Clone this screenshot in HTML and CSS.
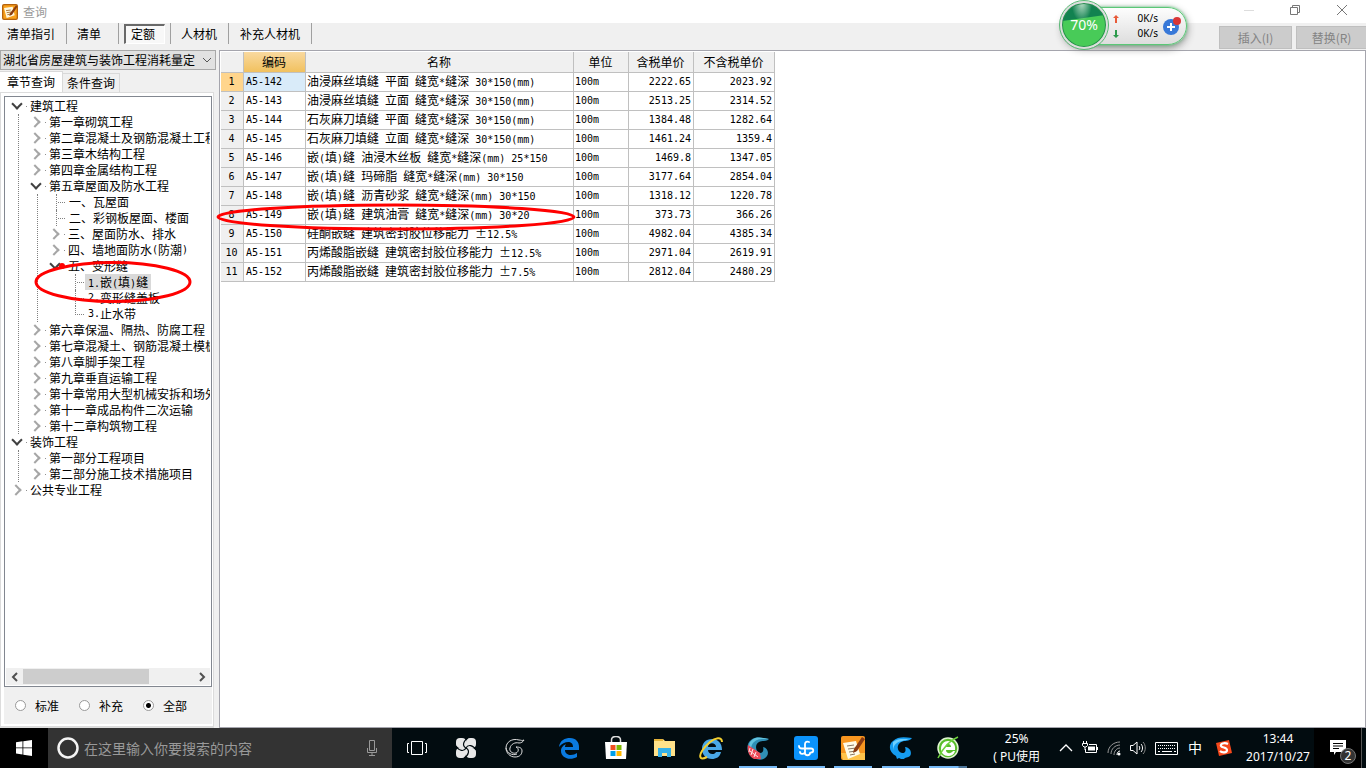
FILE: index.html
```html
<!DOCTYPE html>
<html lang="zh-CN">
<head>
<meta charset="utf-8">
<title>查询</title>
<link rel="stylesheet" href="styles.css">
</head>
<body>
<header class="titlebar">
  <svg class="app-icon" viewBox="0 0 24 24"><rect x="1" y="1" width="22" height="22" rx="2" fill="#f9a11b" stroke="#b5620c" stroke-width="2"/><path d="M3 6l13-2 3 13-12 4z" fill="#fff8e0"/><path d="M6 10l7-1M7 13l7-1M8 16l6-1" stroke="#a06a2a" stroke-width="1.3"/><path d="M21 2l-9 12-1 4 4-2 8-12z" fill="#8a3c10"/></svg>
  <h1 class="title">查询</h1>
  <div class="window-buttons">
    <button aria-label="最小化"><svg viewBox="0 0 12 12"><path d="M1 6.500h10" stroke="#ddd"/></svg></button>
    <button aria-label="还原"><svg viewBox="0 0 12 12"><path d="M1.500 3.500h7v7h-7zM3.500 3.500v-2h7v7h-2" fill="none" stroke="#777"/></svg></button>
    <button aria-label="关闭"><svg viewBox="0 0 12 12"><path d="M1 1l10 10M11 1L1 11" stroke="#777"/></svg></button>
  </div>
</header>
<nav class="toolbar">
  <button class="tool">清单指引</button>
  <button class="tool">清单</button>
  <button class="tool pressed"><span>定额</span></button>
  <button class="tool">人材机</button>
  <button class="tool">补充人材机</button>
  <div class="actions">
    <button disabled>插入(I)</button>
    <button disabled>替换(R)</button>
  </div>
</nav>
<main class="workspace">
  <aside class="sidebar">
    <div class="library">
      <select aria-label="定额库"><option>湖北省房屋建筑与装饰工程消耗量定</option></select>
      <svg viewBox="0 0 10 6"><path d="M1 1l4 4 4-4" fill="none" stroke="#555"/></svg>
    </div>
    <div class="tabs" role="tablist">
      <button class="tab active" role="tab" aria-selected="true">章节查询</button>
      <button class="tab" role="tab">条件查询</button>
    </div>
    <div class="tab-page">
      <div class="tree-box">
        <ul class="tree">
          <li><div class="node"><button class="open" aria-label="折叠"></button>建筑工程</div>
            <ul>
              <li><div class="node"><button aria-label="展开"></button>第一章砌筑工程</div></li>
              <li><div class="node"><button aria-label="展开"></button>第二章混凝土及钢筋混凝土工程</div></li>
              <li><div class="node"><button aria-label="展开"></button>第三章木结构工程</div></li>
              <li><div class="node"><button aria-label="展开"></button>第四章金属结构工程</div></li>
              <li><div class="node"><button class="open" aria-label="折叠"></button>第五章屋面及防水工程</div>
                <ul>
                  <li><div class="node leaf">一、瓦屋面</div></li>
                  <li><div class="node leaf">二、彩钢板屋面、楼面</div></li>
                  <li><div class="node"><button aria-label="展开"></button>三、屋面防水、排水</div></li>
                  <li><div class="node"><button aria-label="展开"></button>四、墙地面防水<span class="m">(</span>防潮<span class="m">)</span></div></li>
                  <li><div class="node"><button class="open" aria-label="折叠"></button>五、变形缝</div>
                    <ul class="last">
                      <li><div class="node leaf"><span class="selected"><span class="m">1.</span>嵌<span class="m">(</span>填<span class="m">)</span>缝</span></div></li>
                      <li><div class="node leaf"><span class="m">2.</span>变形缝盖板</div></li>
                      <li><div class="node leaf"><span class="m">3.</span>止水带</div></li>
                    </ul>
                  </li>
                </ul>
              </li>
              <li><div class="node"><button aria-label="展开"></button>第六章保温、隔热、防腐工程</div></li>
              <li><div class="node"><button aria-label="展开"></button>第七章混凝土、钢筋混凝土模板</div></li>
              <li><div class="node"><button aria-label="展开"></button>第八章脚手架工程</div></li>
              <li><div class="node"><button aria-label="展开"></button>第九章垂直运输工程</div></li>
              <li><div class="node"><button aria-label="展开"></button>第十章常用大型机械安拆和场外</div></li>
              <li><div class="node"><button aria-label="展开"></button>第十一章成品构件二次运输</div></li>
              <li><div class="node"><button aria-label="展开"></button>第十二章构筑物工程</div></li>
            </ul>
          </li>
          <li><div class="node"><button class="open" aria-label="折叠"></button>装饰工程</div>
            <ul>
              <li><div class="node"><button aria-label="展开"></button>第一部分工程项目</div></li>
              <li><div class="node"><button aria-label="展开"></button>第二部分施工技术措施项目</div></li>
            </ul>
          </li>
          <li><div class="node"><button aria-label="展开"></button>公共专业工程</div></li>
        </ul>
        <div class="hscroll">
          <button aria-label="向左"><svg viewBox="0 0 8 10"><path d="M6 1L2 5l4 4" fill="none" stroke="#505050" stroke-width="2"/></svg></button>
          <div class="track"><div class="thumb"></div></div>
          <button aria-label="向右"><svg viewBox="0 0 8 10"><path d="M2 1l4 4-4 4" fill="none" stroke="#505050" stroke-width="2"/></svg></button>
        </div>
      </div>
      <div class="filters">
        <label><input type="radio" name="scope">标准</label>
        <label><input type="radio" name="scope">补充</label>
        <label><input type="radio" name="scope" checked>全部</label>
      </div>
    </div>
  </aside>
  <section class="content">
    <table class="quota">
      <colgroup><col class="c-no"><col class="c-code"><col class="c-name"><col class="c-unit"><col class="c-price"><col class="c-net"></colgroup>
      <thead><tr><th></th><th class="sorted">编码</th><th>名称</th><th>单位</th><th>含税单价</th><th>不含税单价</th></tr></thead>
      <tbody>
        <tr class="current"><th>1</th><td>A5-142</td><td>油浸麻丝填缝<span class="m"> </span>平面<span class="m"> </span>缝宽<span class="m">*</span>缝深<span class="m"> 30*150(mm)</span></td><td>100m</td><td>2222.65</td><td>2023.92</td></tr>
        <tr><th>2</th><td>A5-143</td><td>油浸麻丝填缝<span class="m"> </span>立面<span class="m"> </span>缝宽<span class="m">*</span>缝深<span class="m"> 30*150(mm)</span></td><td>100m</td><td>2513.25</td><td>2314.52</td></tr>
        <tr><th>3</th><td>A5-144</td><td>石灰麻刀填缝<span class="m"> </span>平面<span class="m"> </span>缝宽<span class="m">*</span>缝深<span class="m"> 30*150(mm)</span></td><td>100m</td><td>1384.48</td><td>1282.64</td></tr>
        <tr><th>4</th><td>A5-145</td><td>石灰麻刀填缝<span class="m"> </span>立面<span class="m"> </span>缝宽<span class="m">*</span>缝深<span class="m"> 30*150(mm)</span></td><td>100m</td><td>1461.24</td><td>1359.4</td></tr>
        <tr><th>5</th><td>A5-146</td><td>嵌<span class="m">(</span>填<span class="m">)</span>缝<span class="m"> </span>油浸木丝板<span class="m"> </span>缝宽<span class="m">*</span>缝深<span class="m">(mm) 25*150</span></td><td>100m</td><td>1469.8</td><td>1347.05</td></tr>
        <tr><th>6</th><td>A5-147</td><td>嵌<span class="m">(</span>填<span class="m">)</span>缝<span class="m"> </span>玛碲脂<span class="m"> </span>缝宽<span class="m">*</span>缝深<span class="m">(mm) 30*150</span></td><td>100m</td><td>3177.64</td><td>2854.04</td></tr>
        <tr><th>7</th><td>A5-148</td><td>嵌<span class="m">(</span>填<span class="m">)</span>缝<span class="m"> </span>沥青砂浆<span class="m"> </span>缝宽<span class="m">*</span>缝深<span class="m">(mm) 30*150</span></td><td>100m</td><td>1318.12</td><td>1220.78</td></tr>
        <tr><th>8</th><td>A5-149</td><td>嵌<span class="m">(</span>填<span class="m">)</span>缝<span class="m"> </span>建筑油膏<span class="m"> </span>缝宽<span class="m">*</span>缝深<span class="m">(mm) 30*20</span></td><td>100m</td><td>373.73</td><td>366.26</td></tr>
        <tr><th>9</th><td>A5-150</td><td>硅酮嵌缝<span class="m"> </span>建筑密封胶位移能力<span class="m"> </span>±<span class="m">12.5%</span></td><td>100m</td><td>4982.04</td><td>4385.34</td></tr>
        <tr><th>10</th><td>A5-151</td><td>丙烯酸脂嵌缝<span class="m"> </span>建筑密封胶位移能力<span class="m"> </span>±<span class="m">12.5%</span></td><td>100m</td><td>2971.04</td><td>2619.91</td></tr>
        <tr><th>11</th><td>A5-152</td><td>丙烯酸脂嵌缝<span class="m"> </span>建筑密封胶位移能力<span class="m"> </span>±<span class="m">7.5%</span></td><td>100m</td><td>2812.04</td><td>2480.29</td></tr>
      </tbody>
    </table>
  </section>
</main>

<footer class="taskbar">
  <button class="start" aria-label="开始"><svg viewBox="0 0 16 16"><path d="M0 2.200l6.500-.9v6.200H0zM7.300 1.200L16 0v7.500H7.300zM0 8.300h6.500v6.200L0 13.600zM7.300 8.300H16V16l-8.700-1.200z" fill="#fff"/></svg></button>
  <div class="search">
    <svg class="ring" viewBox="0 0 22 22"><circle cx="11" cy="11" r="9.500" fill="none" stroke="#f4f4f4" stroke-width="2.500"/></svg>
    <input type="text" aria-label="搜索" placeholder="在这里输入你要搜索的内容">
    <svg class="mic" viewBox="0 0 12 18"><path d="M3.500 1.500h5v10h-5zM1.500 9v4.500h9V9M6 13.500v3M3 16.500h6" fill="none" stroke="#999"/></svg>
  </div>
  <div class="shell-icons">
    <button aria-label="任务视图"><svg viewBox="0 0 22 22"><path d="M5.500 4.500h11v13h-11zM3 6.500H1.500v9H3M19 6.500h1.500v9H19" fill="none" stroke="#fff"/></svg></button>
    <button aria-label="四叶应用"><svg viewBox="0 0 22 22"><rect x="1" y="1" width="10" height="10" rx="4" fill="#e8e8e8"/><rect x="11" y="1" width="10" height="10" rx="4" fill="#e8e8e8"/><rect x="1" y="11" width="10" height="10" rx="4" fill="#e8e8e8"/><rect x="11" y="11" width="10" height="10" rx="4" fill="#e8e8e8"/><circle cx="11" cy="11" r="5" fill="#e8e8e8"/><path d="M11 11C7 9 8 4 13 1M11 11c2-4 7-3 10 2M11 11c4 2 3 7-2 10M11 11c-2 4-7 3-10-2" fill="none" stroke="#020c10" stroke-width="1.200"/></svg></button>
    <button aria-label="旋风应用"><svg viewBox="0 0 22 22"><path d="M20 3c-2 1-3 0-5 0C8 1 2 5 2 11c0 5 4 9 9 9 5 0 7-3 7-6 0-3-2-4-6-4 3 1 3 5 0 6-4 1-7-2-6-5 1-4 5-6 9-5 2 0 4-1 5-3zM2 11c1 5 6 8 11 6" fill="none" stroke="#ddd"/></svg></button>
  </div>
  <div class="apps">
    <button aria-label="Edge"><svg viewBox="0 0 24 24"><path d="M2 11C3 4 8 2 13 2c6 0 9 4 9 9v3H8c0 6 8 6 12 3v4c-7 4-16 1-16-6 0-4 3-6 5-7-1 1-1 3-1 3h8c0-7-9-6-14 0z" fill="#0a7ae0"/></svg></button>
    <button aria-label="应用商店"><svg viewBox="0 0 24 24"><path d="M7.500 7V4c0-3 2-3.500 4.500-3.500S16.500 1 16.500 4v3" fill="none" stroke="#ddd" stroke-width="1.500"/><path d="M1 6h22l-1 17H2z" fill="#fff"/><path d="M6.500 9h5v5h-5z" fill="#f04e1f"/><path d="M12.500 9h5v5h-5z" fill="#7db700"/><path d="M6.500 15h5v5h-5z" fill="#009fe8"/><path d="M12.500 15h5v5h-5z" fill="#ffb800"/></svg></button>
    <button aria-label="文件资源管理器"><svg viewBox="0 0 24 24"><path d="M2 3h9l2 2h10v15H2z" fill="#ffe28a"/><path d="M2 3h9v2H2z" fill="#e5b33a"/><path d="M6 12h13v9h-4v-4h-5v4H6z" fill="#35b1e8"/></svg></button>
    <button aria-label="Internet Explorer"><svg viewBox="0 0 24 24"><path d="M3 13C3 7 7 3 13 3s10 4 10 11H9c0 5 7 5 8 2h5c-1 5-5 7-9 7-6 0-10-4-10-10zm6-2h8c0-5-8-5-8 0z" fill="#4aa8e6"/><path d="M23 6c0-6-7-4-12 0C5 11-1 19 2 22c1 1 4 0 6-1" fill="none" stroke="#f5d030" stroke-width="2"/></svg></button>
    <button class="running" aria-label="广联达"><svg viewBox="0 0 24 24"><path d="M23 3c-3 3-7 1-10 3-5 3-3 10 1 11 3 0 4-3 3-6 5 1 6 6 4 9-4 6-13 4-17-1C0 14 1 7 5 4 10 0 16 2 23 3z" fill="#2f8fb5"/><path d="M23 3c-7 0-12-1-16 4-2 3-2 5-2 7-3-4-2-8 1-10 5-4 11-2 17-1z" fill="#62c3df"/><path d="M2 9l12 8 1 6H8c-5-2-7-8-6-14z" fill="#ec4b58"/><path d="M4 12l-1 4M7 13l-2 6M10 16l-2 5M4 15l8 6" stroke="#ffe5e7"/></svg></button>
    <button class="running" aria-label="加密应用"><svg viewBox="0 0 24 24"><rect width="24" height="24" rx="3" fill="#0b93fb"/><path d="M15 6c-2-1-4 0-4 2v9c0 3 5 3 5 0M5 10c0 2 1 2.500 3 2.500h9c3 0 3 4 0 4M11 16c-1 3-5 2-5 0" fill="none" stroke="#fff" stroke-width="1.800" stroke-linecap="round"/></svg></button>
    <button class="running" aria-label="计价软件"><svg viewBox="0 0 24 24"><rect width="24" height="24" rx="2" fill="#f79620"/><path d="M0 17h24v7H2z" fill="#ffc34a"/><path d="M2 7l13-2 4 13-12 5z" fill="#fffbe8"/><path d="M6 10l7-1M7 13l8-1M8 16l7-1M9 19l5-1" stroke="#876"/><path d="M21 1l-8 12-1 4 4-2 8-12z" fill="#8b3b12"/></svg></button>
    <button class="running" aria-label="广联达云"><svg viewBox="0 0 24 24"><path d="M23 2c-3 4-7 2-11 4-5 3-4 10 1 11 4 0 4-3 3-6 6 1 7 6 5 9-2 2-5 1-6 3h-3l-2-1-2 1-1-3C0 16-1 9 4 5 9 0 16 1 23 2z" fill="#159cf0"/><path d="M4 6c5-4 10-3 16-3-7 3-15 1-16 12" fill="#6ed0ff"/></svg></button>
    <button class="running stacked" aria-label="浏览器"><svg viewBox="0 0 24 24"><circle cx="12" cy="12" r="10" fill="#58bd2b" stroke="#dff5d0" stroke-width="1.500"/><path d="M5 13c0-5 3-8 7-8s8 3 7 9h-9c0 4 5 4 7 1h2c-1 4-4 5-7 5-4 0-7-3-7-7zm5-2h5c0-4-5-4-5 0z" fill="#fff"/><path d="M2 22C6 14 12 5 22 1" fill="none" stroke="#6fd33e" stroke-width="1.500"/></svg></button>
  </div>
  <div class="tray">
    <div class="cpu"><span>25%</span><span>( PU使用</span></div>
    <button aria-label="显示隐藏的图标"><svg viewBox="0 0 16 16"><path d="M2 11l6-6 6 6" fill="none" stroke="#fff" stroke-width="1.300"/></svg></button>
    <button aria-label="电池"><svg viewBox="0 0 16 16"><path d="M7 4.500h7.500v8H3.500V9M15.500 7v3" fill="none" stroke="#fff"/><path d="M6 6.500h7v4H6z" fill="#fff"/><path d="M1.500 1v2M4.500 1v2M.5 3.500h5v2L4 7H2L.5 5.500zM3 7v3" stroke="#fff" fill="none"/></svg></button>
    <button aria-label="无线网络"><svg viewBox="0 0 16 16"><g fill="none" stroke="#999"><path d="M2 13C2 7 7 2 14 2M5 14c0-5 4-9 9-9M8 15c0-4 3-7 6-7"/><path d="M11 15c0-2 1-4 3-4" stroke="#fff"/></g><circle cx="13" cy="14" r="1.500" fill="#fff"/></svg></button>
    <button aria-label="音量"><svg viewBox="0 0 16 16"><path d="M.5 5.500H3l4-3.500v12l-4-3.500H.5zM9 6c1 1 1 3 0 4M11 4c2 2 2 6 0 8" fill="none" stroke="#fff"/><path d="M13 2c3 3 3 9 0 12" fill="none" stroke="#888"/></svg></button>
    <button class="wide" aria-label="触摸键盘"><svg viewBox="0 0 24 16"><path d="M.5 2.500h22v12H.500z" fill="none" stroke="#fff"/><path d="M3 5.500h18M3 8.500h18" stroke="#fff" stroke-dasharray="1 1"/><path d="M3 11.500h2M7 11.500h10M19 11.500h2" stroke="#fff"/></svg></button>
    <button class="ime" aria-label="输入法">中</button>
    <button class="sogou" aria-label="搜狗输入法"><svg viewBox="0 0 16 16"><path d="M0 3L13 0l3 13-13 3z" fill="#f5481b"/><path d="M12 4C8 2 4 4 5 6s6 1 6 4-5 3-7 1" fill="none" stroke="#fff" stroke-width="2.200"/></svg></button>
    <div class="clock"><time>13:44</time><span>2017/10/27</span></div>
    <button class="notice" aria-label="通知"><svg viewBox="0 0 24 24"><path d="M0 1h16v12H6l-2 3v-3H0z" fill="#fff"/><path d="M3 4.500h10M3 7h10M3 9.500h6" stroke="#000"/></svg><span class="count">2</span></button>
  </div>
</footer>

<aside class="speed-ball">
  <div class="rates">
    <svg viewBox="0 0 8 10"><path d="M4 1l3 3H5v5H3V4H1z" fill="#e85a38"/></svg><span>0K/s</span>
    <svg viewBox="0 0 8 10"><path d="M4 9l3-3H5V1H3v5H1z" fill="#2c9a4b"/></svg><span>0K/s</span>
  </div>
  <button class="boost" aria-label="加速"><svg viewBox="0 0 20 20"><circle cx="9" cy="11" r="8" fill="#3878d8"/><path d="M9 7v8M5 11h8" stroke="#fff" stroke-width="2"/><circle cx="15" cy="5" r="4" fill="#d93636"/></svg></button>
  <div class="ball">70%</div>
</aside>
<svg class="mark mark-tree" viewBox="0 0 160 44"><ellipse cx="80" cy="22" rx="77" ry="19.500" fill="none" stroke="#f00" stroke-width="3"/><circle cx="29" cy="6" r="3" fill="#f00"/></svg>
<svg class="mark mark-row" viewBox="0 0 360 30"><ellipse cx="180" cy="15" rx="178" ry="12" fill="none" stroke="#f00" stroke-width="3"/></svg>
</body>
</html>
```
FILE: styles.css
```css
* { box-sizing: border-box; }
body {
  margin: 0;
  height: 100vh;
  display: flex;
  flex-direction: column;
  overflow: hidden;
  position: relative;
  background: #f0f0f0;
  color: #000;
  font: 12px/16px "Noto Sans CJK SC", sans-serif;
}
button, input, select { font: inherit; color: inherit; margin: 0; padding: 0; border: 0; background: none; }
button { display: flex; align-items: center; justify-content: center; }
svg { display: block; }
ul { list-style: none; margin: 0; padding: 0; }
.m { font-family: "DejaVu Sans Mono", monospace; font-size: 10px; white-space: pre; }

.titlebar { height: 23px; flex: none; display: flex; align-items: center; background: #fff; padding-left: 2px; }
.app-icon { width: 16px; height: 16px; }
.title { margin: 0 0 0 5px; font-size: 12px; font-weight: 400; color: #999; }
.window-buttons { margin-left: auto; display: flex; padding-bottom: 3px; }
.window-buttons button { width: 46px; height: 20px; }
.window-buttons svg { width: 12px; height: 12px; }
.window-buttons button:last-child { width: 48px; }

.toolbar { height: 27px; flex: none; display: flex; align-items: flex-start; }
.tool { height: 21px; border-right: 1px solid #a0a0a0; padding: 0 11px; }
.tool:first-child { padding: 0 11px 0 7px; }
.tool:nth-child(2) { padding: 0 17px 0 10px; }
.tool.pressed { padding: 0 5px; }
.tool.pressed span { padding: 0 9px 0 5px; height: 20px; margin-top: 1px; background: #f8f8f8; border-top: 2px solid #696969; border-left: 2px solid #696969; border-right: 1px solid #fff; border-bottom: 1px solid #fff; }
.tool:nth-child(4) { padding: 0 11px 0 10px; }
.actions { margin-left: auto; display: flex; gap: 4px; padding-top: 3px; }
.actions button { width: 73px; height: 23px; border: 1px solid #bfbfbf; background: #ccc; color: #838383; }
.actions button:last-child { width: 70px; border-right: 0; }

.workspace { flex: 1; min-height: 0; display: flex; gap: 3px; }
.sidebar { width: 216px; display: flex; flex-direction: column; }
.library { display: grid; align-items: center; height: 20px; flex: none; }
.library select { grid-area: 1 / 1; width: 100%; min-width: 0; appearance: none; height: 20px; border: 1px solid #a8a8a8; background: #e1e1e1; padding: 0 0 0 2px; }
.library svg { grid-area: 1 / 1; justify-self: end; width: 10px; height: 6px; margin-right: 4px; pointer-events: none; }
.tabs { display: flex; align-items: flex-end; height: 22px; flex: none; }
.tab { height: 19px; padding: 0 4px; border: 1px solid #d9d9d9; border-width: 1px 1px 0 0; }
.tab.active { height: 21px; padding: 0 7px; background: #fff; }
.tab-page { flex: 1; min-height: 0; width: 214px; display: flex; flex-direction: column; border: 1px solid #dcdcdc; border-bottom-width: 2px; background: #fff; padding: 3px 1px 2px 3px; }
.tree-box { flex: 1; min-height: 0; border: 1px solid #828790; display: flex; flex-direction: column; padding: 1px; overflow: hidden; }
.tree { flex: 1; min-height: 0; overflow: hidden; }
.tree > li { margin-left: -7px; }
.tree ul { margin-left: 19px; border-left: 1px dotted #808080; }
.tree ul > li { margin-left: -1px; }
.tree ul.last { border-left-color: transparent; }
.node { height: 16px; display: flex; align-items: center; padding-left: 13px; white-space: nowrap; }
.node button { flex: none; width: 18px; height: 16px; justify-content: flex-start; background: linear-gradient(#909090, #909090) 14px 8px / 1px 1px no-repeat; }
.node button::before { content: ""; width: 6px; height: 6px; border: solid #a6a6a6; border-width: 2px 2px 0 0; transform: rotate(45deg); }
.node button.open::before { border-color: #404040; transform: translate(1px, -2px) rotate(135deg); }
.node.leaf::before { content: ""; width: 12px; height: 16px; margin-left: 6px; border-left: 1px dotted #808080; background: repeating-linear-gradient(90deg, #808080 0 1px, transparent 1px 2px) 1px 8px / 7px 1px no-repeat; }
.last li:last-child .leaf::before { height: 8px; align-self: flex-start; border-bottom: 1px dotted #808080; width: 8px; margin-right: 4px; background: none; }
.selected { background: #d9d9d9; height: 16px; margin-left: -3px; padding: 0 3px; }
.hscroll { height: 17px; flex: none; display: flex; background: #f0f0f0; }
.hscroll button { width: 17px; }
.hscroll svg { width: 8px; height: 10px; }
.track { flex: 1; padding: 1px 0; }
.thumb { width: 74%; height: 15px; background: #cdcdcd; }
.filters { height: 37px; flex: none; display: flex; align-items: center; gap: 16px; padding-left: 11px; background: #f0f0f0; }
.filters label { display: flex; align-items: center; gap: 9px; width: 48px; white-space: nowrap; }
.filters input { appearance: none; flex: none; width: 11px; height: 11px; border: 1px solid #999; border-radius: 50%; background: #fff; }
.filters input:checked { background: radial-gradient(circle, #000 0 2px, #fff 3px); }

.content { flex: 1; min-width: 0; background: #fff; border: 1px solid #a5a5ad; padding: 1px; }
.quota { border-collapse: separate; border-spacing: 0; table-layout: fixed; width: 554px; }
.c-no { width: 23px; }
.c-code { width: 62px; }
.c-name { width: 268px; }
.c-unit { width: 55px; }
.c-price { width: 65px; }
.c-net { width: 81px; }
.quota th, .quota td { height: 19px; padding: 0 2px 0 1px; border-right: 1px solid #c0c0c0; border-bottom: 1px solid #c0c0c0; font-weight: 400; white-space: nowrap; overflow: hidden; line-height: 16px; }
.quota th { background: #f0f0f0; text-align: center; }
.quota thead th { height: 21px; }
.quota thead .sorted { background: linear-gradient(#f9d99f, #f1c15f); }
.quota tbody th, .quota td { font-family: "DejaVu Sans Mono", monospace; font-size: 10px; }
.quota td:nth-child(2) { padding-left: 2px; }
.quota td:nth-child(3) { font-family: "Noto Sans CJK SC", sans-serif; font-size: 12px; }
.quota td:nth-child(n+5) { text-align: right; }
.quota .current th { background: #ffd58c; }
.quota .current td:nth-child(2) { background: #d9ebf9; }

.taskbar { height: 40px; flex: none; display: flex; background: #020c10; color: #fff; font-family: "Noto Sans", "Noto Sans CJK SC", sans-serif; }
.start { width: 48px; background: #000; }
.start svg { width: 16px; height: 16px; }
.search { width: 344px; flex: none; display: flex; align-items: center; background: #333; padding: 0 14px 0 9px; }
.ring { width: 22px; height: 22px; }
.search input { flex: 1; min-width: 0; padding-left: 5px; font: 14px/20px "Noto Sans CJK SC", sans-serif; outline: 0; }
.search input::placeholder { color: #999; opacity: 1; }
.mic { width: 12px; height: 18px; }
.shell-icons { display: flex; width: 148px; flex: none; }
.shell-icons button { flex: 1; }
.shell-icons svg { width: 22px; height: 22px; }
.apps svg { width: 24px; height: 24px; }
.apps { display: grid; grid-template-columns: repeat(9, 1fr); width: 427px; flex: none; margin-left: 5px; }
.running { background: linear-gradient(#76b9f5, #76b9f5) center bottom / 38px 2px no-repeat; }
.running.stacked { background: linear-gradient(90deg, #76b9f5 29px, #4c7599 30px) center bottom / 38px 2px no-repeat; }
.tray { margin-left: auto; flex: none; display: flex; align-items: stretch; padding-right: 4px; }
.tray > button { width: 24px; }
.tray svg { width: 16px; height: 16px; }
.cpu, .clock { display: flex; flex-direction: column; justify-content: center; align-items: center; line-height: 18px; white-space: nowrap; }
.cpu { margin-right: 14px; }
.tray .wide { width: 34px; }
.tray .wide svg { width: 24px; }
.tray .ime { width: 22px; font-size: 14px; }
.tray .sogou { width: 36px; }
.clock { width: 72px; }
.tray .notice { width: 48px; background: #000; position: relative; border-right: 1px solid #555; }
.tray .notice svg { width: 24px; height: 24px; margin: 6px 0 0 0; }
.count { position: absolute; right: 5px; bottom: 4px; width: 16px; height: 16px; border: 1px solid #777; border-radius: 50%; background: #333; font-size: 12px; line-height: 14px; text-align: center; }
.tray .notice { padding-left: 9px; }

.speed-ball { position: absolute; top: 7px; right: 179px; width: 124px; height: 38px; display: flex; align-items: center; border: 1px solid #5bc777; border-radius: 19px; background: linear-gradient(#fdfdfd, #ddd); box-shadow: 0 0 3px #5bc777, 0 3px 8px #888; }
.rates { display: grid; grid-template-columns: 8px 1fr; align-items: center; width: 46px; margin-left: 48px; font: 10px/15px "Noto Sans", sans-serif; text-align: right; }
.rates svg { width: 8px; height: 10px; }
.boost svg { width: 20px; height: 20px; margin-left: 4px; }
.ball { position: absolute; top: -7px; left: -4px; width: 48px; height: 48px; border: 2px solid #ddd; border-radius: 50%; outline: 1px solid #58b873; background: radial-gradient(ellipse at 45% 0, #b5dcc5 0, transparent 30%), linear-gradient(172deg, #128250 35%, #48cb58 37%); box-shadow: inset 0 0 0 1px #278b4d; color: #fff; font: 14px/44px "Noto Sans", sans-serif; text-align: center; }
.mark { position: absolute; pointer-events: none; }
.mark-tree { left: 33px; top: 260px; width: 160px; height: 44px; }
.mark-row { left: 216px; top: 202px; width: 360px; height: 30px; }
```
